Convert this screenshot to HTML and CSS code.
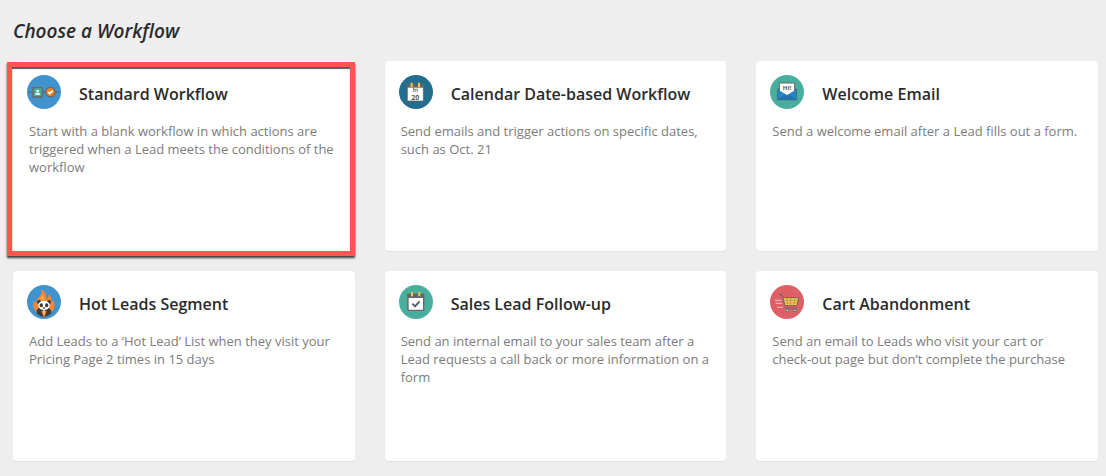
FILE: index.html
```html
<!DOCTYPE html>
<html lang="en">
<head>
<meta charset="utf-8">
<meta name="viewport" content="width=device-width, initial-scale=1">
<title>Choose a Workflow</title>
<link rel="stylesheet" href="styles.css">
</head>
<body>
<main class="page">
  <h1 class="page-title">Choose a Workflow</h1>
  <div class="grid">
    <button type="button" class="card card-selected">
      <span class="card-head">
        <svg class="icon" viewBox="0 0 102 102" aria-hidden="true">
          <circle cx="51" cy="51" r="51" fill="#4193cd"/>
          <path d="M4 52H96" stroke="#666" stroke-width="3"/>
          <rect x="18" y="38" width="28" height="28" rx="2" fill="#4aae9b" stroke="#666" stroke-width="4"/>
          <circle cx="32" cy="48" r="4" fill="#fff"/>
          <path d="M25 59v-3q2-3 7-3t7 3v3z" fill="#fff"/>
          <circle cx="70" cy="51" r="14" fill="#f5821f" stroke="#666" stroke-width="4"/>
          <path d="M63 51l5 5 9-9" fill="none" stroke="#fff" stroke-width="5"/>
        </svg>
        <span class="card-title">Standard Workflow</span>
      </span>
      <span class="card-text">Start with a blank workflow in which actions are triggered when a Lead meets the conditions of the workflow</span>
    </button>

    <button type="button" class="card">
      <span class="card-head">
        <svg class="icon" viewBox="0 0 102 102" aria-hidden="true">
          <circle cx="51" cy="51" r="51" fill="#236d8f"/>
          <rect x="25" y="30" width="48" height="48" rx="2" fill="#fff" stroke="#5c5c5c" stroke-width="2"/>
          <path d="M24 28h50v10H24z" fill="#666"/>
          <path d="M38 23v13M60 23v13" stroke="#f6c544" stroke-width="6"/>
          <text class="icon-day" x="49" y="52" text-anchor="middle">fri</text>
          <text class="icon-date" x="49" y="74" text-anchor="middle">20</text>
        </svg>
        <span class="card-title">Calendar Date-based Workflow</span>
      </span>
      <span class="card-text">Send emails and trigger actions on specific dates, such as Oct. 21</span>
    </button>

    <button type="button" class="card">
      <span class="card-head">
        <svg class="icon" viewBox="0 0 102 102" aria-hidden="true">
          <circle cx="51" cy="51" r="51" fill="#48ae9d"/>
          <path d="M22 42l29-15 29 15v32H22z" fill="#20659e"/>
          <path d="M28 24h46v30L51 63 28 54z" fill="#fff" stroke="#666" stroke-width="3"/>
          <text class="icon-hi" x="51" y="46" text-anchor="middle">HI!</text>
          <path d="M22 43l29 17 29-17v32H22z" fill="#2585c5"/>
          <path d="M22 75l23-17 6 4 6-4 23 17z" fill="#2173b0"/>
          <path d="M22 43v32h58V43" fill="none" stroke="#516b7e" stroke-width="2"/>
        </svg>
        <span class="card-title">Welcome Email</span>
      </span>
      <span class="card-text">Send a welcome email after a Lead fills out a form.</span>
    </button>

    <button type="button" class="card">
      <span class="card-head">
        <svg class="icon" viewBox="0 0 102 102" aria-hidden="true">
          <circle cx="51" cy="51" r="51" fill="#4193cd"/>
          <path d="M30 83C18 72 15 58 20 46c3 6 5 7 8 8 0-10 3-14 9-18 6-6 8-13 5-23 11 5 17 13 15 25l3 4c4-4 6-9 5-15 9 8 9 16 8 24 4-1 5-4 6-7 6 13 4 27-5 38z" fill="#f58634"/>
          <path d="M39 42c5-5 7-9 6-14 6 6 6 12 5 17z" fill="#ffb04d"/>
          <path d="M28 82q1-17 22-17t24 17q-9 13-24 14-14-1-22-14z" fill="#3c3c3c"/>
          <circle cx="36" cy="51" r="6" fill="#3c3c3c"/>
          <circle cx="66" cy="51" r="6" fill="#3c3c3c"/>
          <ellipse cx="51" cy="61" rx="17" ry="14" fill="#fff"/>
          <ellipse cx="43" cy="61" rx="5" ry="6" fill="#3c3c3c"/>
          <ellipse cx="59" cy="61" rx="5" ry="6" fill="#3c3c3c"/>
          <ellipse cx="51" cy="69" rx="4" ry="2" fill="#3c3c3c"/>
          <path d="M43 78h16l-8 22z" fill="#f58634"/>
          <path d="M48 76h6l-3 16z" fill="#ffe0a8"/>
        </svg>
        <span class="card-title">Hot Leads Segment</span>
      </span>
      <span class="card-text">Add Leads to a ‘Hot Lead’ List when they visit your Pricing Page 2 times in 15 days</span>
    </button>

    <button type="button" class="card">
      <span class="card-head">
        <svg class="icon" viewBox="0 0 102 102" aria-hidden="true">
          <circle cx="51" cy="51" r="51" fill="#48ae9d"/>
          <rect x="27" y="29" width="47" height="47" rx="2" fill="#fff" stroke="#666" stroke-width="4"/>
          <path d="M25 26h51v13H25z" fill="#666"/>
          <path d="M39 21v13M61 21v13" stroke="#f6c544" stroke-width="6"/>
          <path d="M40 56l8 8 14-15" fill="none" stroke="#5c5c5c" stroke-width="6"/>
        </svg>
        <span class="card-title">Sales Lead Follow-up</span>
      </span>
      <span class="card-text">Send an internal email to your sales team after a Lead requests a call back or more information on a form</span>
    </button>

    <button type="button" class="card">
      <span class="card-head">
        <svg class="icon" viewBox="0 0 102 102" aria-hidden="true">
          <circle cx="51" cy="51" r="51" fill="#df5f66"/>
          <path d="M15 46h19M17 55h19M22 67h17" stroke="#f3b3b5" stroke-width="4"/>
          <path d="M39 38h47l-5 24H45z" fill="#f6c955"/>
          <path d="M40 46h44M43 54h40M51 38l2 24M62 38v24M74 38l-2 24" stroke="#b98a45" stroke-width="2"/>
          <path d="M27 29h9l11 40h34M39 38h47l-5 24H45" fill="none" stroke="#666" stroke-width="3"/>
          <circle cx="52" cy="76" r="4" fill="#ddd" stroke="#666" stroke-width="3"/>
          <circle cx="75" cy="76" r="4" fill="#ddd" stroke="#666" stroke-width="3"/>
        </svg>
        <span class="card-title">Cart Abandonment</span>
      </span>
      <span class="card-text">Send an email to Leads who visit your cart or check-out page but don’t complete the purchase</span>
    </button>
  </div>
</main>
</body>
</html>
```
FILE: styles.css
```css
* {
  box-sizing: border-box;
}

body {
  margin: 0;
  background: #eee;
  color: #2b2b2b;
  font-family: "Open Sans", "Noto Sans", sans-serif;
}

.page {
  padding: 18px 8px 15px 13px;
}

.page-title {
  margin: 0 0 17px;
  font-size: 19px;
  line-height: 26px;
  font-weight: 600;
  font-style: italic;
}

.grid {
  display: grid;
  grid-template-columns: repeat(3, minmax(0, 1fr));
  grid-auto-rows: minmax(190px, auto);
  gap: 20px 30px;
}

.card {
  position: relative;
  display: flex;
  flex-direction: column;
  justify-content: flex-start;
  gap: 13px;
  padding: 14px;
  border: 0;
  border-radius: 4px;
  background: #fff;
  box-shadow: 0 1px 1px rgba(0, 0, 0, 0.06);
  color: inherit;
  font: inherit;
  text-align: left;
  cursor: pointer;
}

/* The frame extends past the card on the left and the bottom. */
.card-selected::after {
  content: "";
  position: absolute;
  inset: 1px 0 -5px -6px;
  border: 5px solid #ff5650;
  box-shadow: 0 2px 2px rgba(0, 0, 0, 0.75), inset 0 2px 1px rgba(0, 0, 0, 0.65);
  pointer-events: none;
}

.card-head {
  display: flex;
  align-items: flex-end;
  gap: 18px;
}

.icon {
  flex: none;
  width: 34px;
  height: 34px;
}

.icon-day,
.icon-date,
.icon-hi {
  font-family: "Open Sans", sans-serif;
  font-weight: 700;
  fill: #555;
}

.icon-day {
  font-size: 13px;
}

.icon-date {
  font-size: 21px;
}

.icon-hi {
  font-size: 18px;
}

.card-title {
  font-size: 16px;
  line-height: 30px;
  font-weight: 600;
}

.card-text {
  padding-left: 2px;
  color: #7c7c7c;
  font-size: 13px;
  line-height: 18px;
}
```
